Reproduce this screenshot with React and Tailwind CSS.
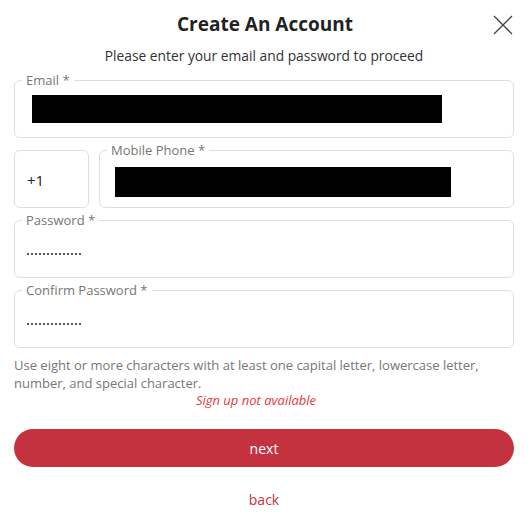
import React from "react";

function Field(props) {
  return (
    <fieldset className="border border-[#dedede] rounded-md px-[7px] m-0 min-w-0">
      <legend className="px-1 text-[13px] leading-4 text-[#767676]">{props.label}</legend>
      <div className="h-[49px] flex items-center">{props.children}</div>
    </fieldset>
  );
}

function Redacted(props) {
  return <div className={"bg-black " + props.className}></div>;
}

function Dots() {
  return (
    <div className="pl-[5px] pt-[3px] flex gap-[2px]">
      {Array.from({ length: 14 }).map((_, i) => (
        <span key={i} className="w-[2px] h-[2px] rounded-full bg-[#222]"></span>
      ))}
    </div>
  );
}

export default function App() {
  return (
    <div className="w-[530px] h-[524px] bg-white font-['Open_Sans',sans-serif] pl-[14px] pr-[16px] relative">
      <div className="h-[48px] flex items-center justify-center">
        <h1 className="text-[19px] font-bold text-[#222] pt-[1px] pl-[2px]">Create An Account</h1>
      </div>
      <button className="absolute right-[17px] top-[15px] text-[#444]">
        <svg width="20" height="20" viewBox="0 0 20 20" fill="none" stroke="currentColor" strokeWidth="1.3">
          <path d="M1 1L19 19M19 1L1 19" />
        </svg>
      </button>
      <p className="text-center text-[13.8px] text-[#333] leading-4">
        Please enter your email and password to proceed
      </p>

      <div className="flex flex-col gap-[4px] mt-[8px]">
        <Field label="Email *">
          <Redacted className="w-[410px] h-[28px] ml-[10px] mt-[-8px]" />
        </Field>
        <div className="flex gap-[10px]">
          <div className="w-[75px] h-[58px] mt-[8px] border border-[#dedede] rounded-md flex items-center pl-[12px] text-[15px] text-[#222] pt-[3px]">
            +1
          </div>
          <div className="flex-1">
            <Field label="Mobile Phone *">
              <Redacted className="w-[336px] h-[30px] ml-[8px] mt-[-1px]" />
            </Field>
          </div>
        </div>
        <Field label="Password *">
          <Dots />
        </Field>
        <Field label="Confirm Password *">
          <Dots />
        </Field>
      </div>

      <p className="mt-[8px] text-[13px] leading-[18px] text-[#777]">
        Use eight or more characters with at least one capital letter, lowercase letter, number, and special character.
      </p>
      <p className="text-center text-[13px] italic text-[#e8383d] leading-[18px] mt-[-1px] pr-[16px]">
        Sign up not available
      </p>
      <button className="mt-[20px] w-full h-[38px] rounded-full bg-[#c5323f] text-white text-[14px]">
        next
      </button>
      <div className="text-center mt-[20px]">
        <button className="text-[14px] text-[#c5323f]">back</button>
      </div>
    </div>
  );
}
